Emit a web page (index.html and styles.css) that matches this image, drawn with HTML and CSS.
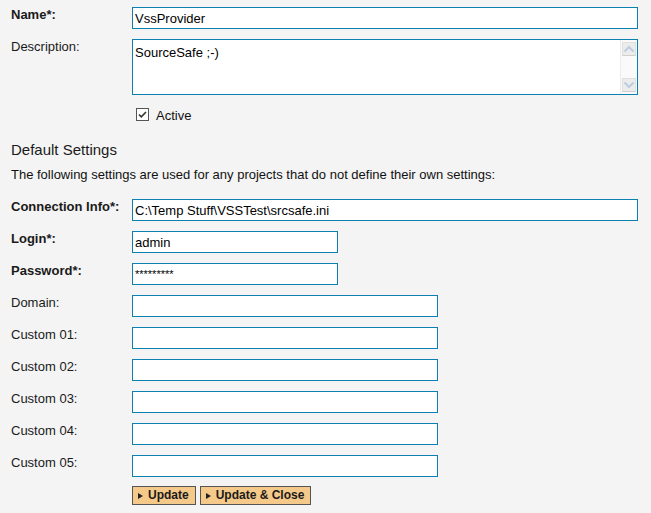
FILE: index.html
```html
<!DOCTYPE html>
<html>
<head>
<meta charset="utf-8">
<title>Vss Provider</title>
<link rel="stylesheet" href="styles.css">
</head>
<body>
<form class="form">
  <div class="row">
    <label class="lbl req">Name*:</label>
    <input class="txt wide" type="text" value="VssProvider">
  </div>
  <div class="row">
    <label class="lbl">Description:</label>
    <div class="area">
      <textarea class="area-text">SourceSafe ;-)</textarea>
      <div class="sbar">
        <span class="sbtn"><svg width="12" height="8" viewBox="0 0 12 8"><path d="M1.5 6.5 L6 2 L10.5 6.5" fill="none" stroke="#bccde0" stroke-width="2"/></svg></span>
        <span class="sbtn"><svg width="12" height="8" viewBox="0 0 12 8"><path d="M1.5 1.5 L6 6 L10.5 1.5" fill="none" stroke="#bccde0" stroke-width="2"/></svg></span>
      </div>
    </div>
  </div>
  <div class="checkrow">
    <span class="check"><svg width="13" height="13" viewBox="0 0 13 13"><rect x="0.5" y="0.5" width="12" height="12" fill="#fff" stroke="#555"/><path d="M3 6.5 L5.3 8.8 L10 4" fill="none" stroke="#333" stroke-width="1.6"/></svg></span>
    <span class="check-text">Active</span>
  </div>
  <h2 class="heading">Default Settings</h2>
  <p class="intro">The following settings are used for any projects that do not define their own settings:</p>
  <div class="rows">
    <div class="row">
      <label class="lbl req">Connection Info*:</label>
      <input class="txt wide" type="text" value="C:\Temp Stuff\VSSTest\srcsafe.ini">
    </div>
    <div class="row">
      <label class="lbl req">Login*:</label>
      <input class="txt short" type="text" value="admin">
    </div>
    <div class="row">
      <label class="lbl req">Password*:</label>
      <input class="txt short pw" type="text" value="*********">
    </div>
    <div class="row">
      <label class="lbl">Domain:</label>
      <input class="txt mid" type="text" value="">
    </div>
    <div class="row">
      <label class="lbl">Custom 01:</label>
      <input class="txt mid" type="text" value="">
    </div>
    <div class="row">
      <label class="lbl">Custom 02:</label>
      <input class="txt mid" type="text" value="">
    </div>
    <div class="row">
      <label class="lbl">Custom 03:</label>
      <input class="txt mid" type="text" value="">
    </div>
    <div class="row">
      <label class="lbl">Custom 04:</label>
      <input class="txt mid" type="text" value="">
    </div>
    <div class="row">
      <label class="lbl">Custom 05:</label>
      <input class="txt mid" type="text" value="">
    </div>
  </div>
  <div class="buttons">
    <button class="btn" type="button"><span class="tri"></span>Update</button>
    <button class="btn" type="button"><span class="tri"></span>Update &amp; Close</button>
  </div>
</form>
</body>
</html>
```

FILE: styles.css
```css
html, body {
  margin: 0;
  padding: 0;
  background: #f4f4f4;
}
body {
  font-family: "Liberation Sans", Arial, sans-serif;
  font-size: 13px;
  color: #111;
}
.form {
  padding: 7px 0 0 11px;
  display: flex;
  flex-direction: column;
}
.rows {
  display: flex;
  flex-direction: column;
  gap: 10px;
}
.row {
  display: flex;
  align-items: flex-start;
}
.row + .row {
  margin-top: 10px;
}
.rows .row + .row {
  margin-top: 0;
}
.lbl {
  width: 121px;
  flex: none;
  line-height: 15px;
  padding-top: 0;
  color: #1a1a1a;
}
.lbl.req {
  font-weight: bold;
}
.txt {
  box-sizing: border-box;
  height: 22px;
  margin: 0;
  border: 1px solid #0b80b1;
  background: #fff;
  padding: 0 2px;
  font-family: "Liberation Sans", Arial, sans-serif;
  font-size: 13px;
  color: #000;
  outline: none;
}
.txt.wide { width: 506px; }
.txt.short { width: 206px; }
.txt.mid { width: 306px; }
.txt.pw { font-size: 11px; }
.area {
  box-sizing: border-box;
  width: 506px;
  height: 56px;
  border: 1px solid #0b80b1;
  background: #fff;
  display: flex;
}
.area-text {
  flex: 1;
  border: 0;
  margin: 0;
  padding: 5px 2px 0;
  resize: none;
  overflow: hidden;
  font-family: "Liberation Sans", Arial, sans-serif;
  font-size: 13px;
  color: #000;
  outline: none;
  background: transparent;
}
.sbar {
  width: 16px;
  flex: none;
  background: #fafafa;
  border-left: 1px solid #ececec;
  display: flex;
  flex-direction: column;
  justify-content: space-between;
  align-items: center;
  padding: 2px 0 2px;
}
.sbtn {
  box-sizing: border-box;
  width: 14px;
  height: 14px;
  background: #ececec;
  border: 1px solid #e0e0e0;
  border-bottom-color: #d0d0d0;
  display: flex;
  align-items: center;
  justify-content: center;
}
.sbtn svg { display: block; }
.checkrow {
  margin-top: 13px;
  padding-left: 125px;
  display: flex;
  align-items: center;
  gap: 7px;
  height: 13px;
}
.check svg { display: block; }
.check-text {
  line-height: 15px;
  padding-top: 1px;
  color: #111;
}
.heading {
  margin: 20px 0 0;
  font-size: 15px;
  font-weight: normal;
  line-height: 18px;
  color: #1a1a1a;
}
.intro {
  margin: 8px 0 16px;
  line-height: 16px;
  color: #111;
}
.buttons {
  margin-top: 9px;
  padding-left: 121px;
  display: flex;
  gap: 4px;
}
.btn {
  box-sizing: border-box;
  height: 19px;
  margin: 0;
  padding: 0 6px 0 5px;
  background: #f5c98a;
  border: 1px solid #555;
  border-radius: 0;
  font-family: "Liberation Sans", Arial, sans-serif;
  font-size: 12px;
  font-weight: bold;
  color: #1a1a1a;
  display: flex;
  align-items: center;
  gap: 5px;
  line-height: 15px;
}
.tri {
  width: 0;
  height: 0;
  border-top: 3px solid transparent;
  border-bottom: 3px solid transparent;
  border-left: 5px solid #222;
}
```
